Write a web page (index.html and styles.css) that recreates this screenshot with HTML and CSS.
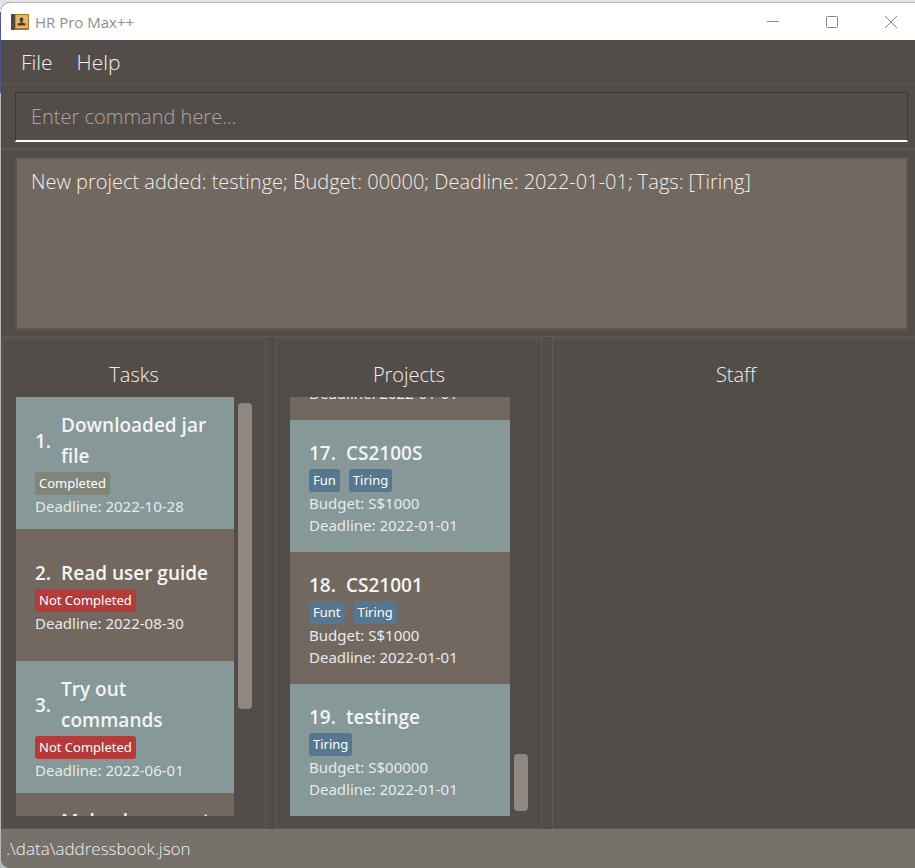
FILE: index.html
```html
<!DOCTYPE html>
<html lang="en">
<head>
<meta charset="utf-8">
<title>HR Pro Max++</title>
<link rel="stylesheet" href="styles.css">
</head>
<body>
<div class="window">
  <header class="titlebar">
    <svg class="app-icon" viewBox="0 0 18 16" aria-hidden="true">
      <rect width="18" height="16" rx="1" fill="#a8761f"/>
      <rect width="4" height="16" rx="1" fill="#54453f"/>
      <rect x="4" y="1" width="13" height="13" fill="#e3b566"/>
      <rect x="4" y="1" width="1" height="13" fill="#c08e3a"/>
      <path d="M10.500 3.500a2 2 0 0 1 1.300 3.400q-.5.8-.3 1.900l3 .8v2h-8v-2l3-.8q.2-1.100-.3-1.900a2 2 0 0 1 1.300-3.400z" fill="#4c3e32"/>
    </svg>
    <span class="app-name">HR Pro Max++</span>
    <div class="window-buttons">
      <button type="button" aria-label="Minimize"><svg viewBox="0 0 12 12"><path d="M0 5.500h12"/></svg></button>
      <button type="button" aria-label="Maximize"><svg viewBox="0 0 12 12"><rect x=".5" y=".5" width="11" height="11" rx="1"/></svg></button>
      <button type="button" aria-label="Close"><svg viewBox="0 0 12 12"><path d="M0 0l12 12M12 0L0 12"/></svg></button>
    </div>
  </header>

  <nav class="menubar">
    <button type="button">File</button>
    <button type="button">Help</button>
  </nav>

  <div class="command-pane">
    <input class="command" type="text" placeholder="Enter command here..." aria-label="Command">
  </div>

  <div class="result-pane">
    <textarea class="result" readonly aria-label="Result">New project added: testinge; Budget: 00000; Deadline: 2022-01-01; Tags: [Tiring]</textarea>
  </div>

  <main class="columns">
    <section class="column">
      <h2>Tasks</h2>
      <div class="scroller">
        <ol class="list">
          <li class="card">
            <div class="title"><span>1.</span><span>Downloaded jar file</span></div>
            <div class="tags"><span class="tag done">Completed</span></div>
            <p>Deadline: 2022-10-28</p>
          </li>
          <li class="card">
            <div class="title"><span>2.</span><span>Read user guide</span></div>
            <div class="tags"><span class="tag pending">Not Completed</span></div>
            <p>Deadline: 2022-08-30</p>
          </li>
          <li class="card">
            <div class="title"><span>3.</span><span>Try out commands</span></div>
            <div class="tags"><span class="tag pending">Not Completed</span></div>
            <p>Deadline: 2022-06-01</p>
          </li>
          <li class="card">
            <div class="title"><span>4.</span><span>Make document<br>file</span></div>
            <div class="tags"><span class="tag pending">Not Completed</span></div>
            <p>Deadline: 2022-06-01</p>
          </li>
        </ol>
        <div class="track"><div class="thumb thumb-tasks"></div></div>
      </div>
    </section>

    <section class="column">
      <h2>Projects</h2>
      <div class="scroller">
        <ol class="list list-end">
          <li class="card">
            <div class="title"><span>16.</span><span>CS2100</span></div>
            <div class="tags"><span class="tag">Fun</span></div>
            <p>Budget: S$1000</p>
            <p>Deadline: 2022-01-01</p>
          </li>
          <li class="card">
            <div class="title"><span>17.</span><span>CS2100S</span></div>
            <div class="tags"><span class="tag">Fun</span><span class="tag">Tiring</span></div>
            <p>Budget: S$1000</p>
            <p>Deadline: 2022-01-01</p>
          </li>
          <li class="card">
            <div class="title"><span>18.</span><span>CS21001</span></div>
            <div class="tags"><span class="tag">Funt</span><span class="tag">Tiring</span></div>
            <p>Budget: S$1000</p>
            <p>Deadline: 2022-01-01</p>
          </li>
          <li class="card">
            <div class="title"><span>19.</span><span>testinge</span></div>
            <div class="tags"><span class="tag">Tiring</span></div>
            <p>Budget: S$00000</p>
            <p>Deadline: 2022-01-01</p>
          </li>
        </ol>
        <div class="track track-end"><div class="thumb thumb-projects"></div></div>
      </div>
    </section>

    <section class="column column-last">
      <h2>Staff</h2>
    </section>
  </main>

  <footer class="statusbar">.\data\addressbook.json</footer>
</div>
</body>
</html>
```

FILE: styles.css
```css
* {
  box-sizing: border-box;
}

body {
  margin: 0;
  padding: 2px 0 0 1px;
  height: 100vh;
  background: linear-gradient(#e2e4e5 12px, #4d5592 12px, #4d5592 93px, #b4b9b8 93px);
  font-family: "Open Sans", "Noto Sans", sans-serif;
}

button,
input,
textarea {
  font: inherit;
  color: inherit;
  margin: 0;
}

h2,
p,
ol {
  margin: 0;
  padding: 0;
}

.window {
  display: flex;
  flex-direction: column;
  height: 100%;
  overflow: hidden;
  border-radius: 9px 0 0 9px;
  background: #534d49;
  color: #f0efee;
  font-weight: 300;
}

.titlebar {
  display: flex;
  align-items: center;
  flex: none;
  height: 38px;
  padding-left: 10px;
  border-top: 1px solid #b3b5b7;
  border-radius: 9px 0 0 0;
  background: #fff;
  color: #8f8f8f;
  font-size: 15px;
  font-weight: 400;
}

.app-icon {
  width: 18px;
  height: 16px;
  margin-right: 6px;
}

.window-buttons {
  display: flex;
  margin-left: auto;
  gap: 11px;
}

.window-buttons button {
  display: grid;
  place-items: center;
  width: 48px;
  height: 36px;
  padding: 0;
  border: 0;
  background: none;
}

.window-buttons svg {
  width: 12px;
  height: 12px;
  fill: none;
  stroke: #8a8a8a;
}

.menubar {
  display: flex;
  flex: none;
  gap: 24px;
  height: 45px;
  padding: 0 20px;
  border-bottom: 1px solid #5f5a56;
  font-size: 21px;
}

.menubar button {
  padding: 0;
  border: 0;
  background: none;
}

.command-pane {
  flex: none;
  padding: 7px 7px 6px 14px;
  border-bottom: 2px solid #5c5752;
}

.command {
  display: block;
  width: 100%;
  height: 50px;
  padding: 0 15px;
  border: 1px solid #403733;
  border-bottom: 2px solid #fff;
  background: #534d49;
  font-size: 20px;
}

.command::placeholder {
  color: #a9a6a3;
  opacity: 1;
}

.result-pane {
  flex: none;
  padding: 7px 7px 6px 14px;
  border-bottom: 1px solid #5f5a56;
}

.result {
  display: block;
  width: 100%;
  height: 173px;
  padding: 9px 14px;
  border: 2px solid #5c5651;
  background: #73685f;
  font-size: 20px;
  line-height: 28px;
  resize: none;
  outline: 0;
}

.columns {
  display: grid;
  grid-template-columns: 264fr 266fr 363fr;
  gap: 10px;
  flex: 1;
  min-height: 0;
  padding: 1px 0 0 1px;
}

.column {
  display: flex;
  flex-direction: column;
  min-width: 0;
  min-height: 0;
  padding: 18px 13px 12px;
  border: 1px solid #5f5a56;
}

.column-last {
  padding-right: 9px;
  border-right: 0;
}

h2 {
  height: 40px;
  font-size: 20px;
  font-weight: 300;
  line-height: 35px;
  text-align: center;
}

.scroller {
  display: flex;
  flex: 1;
  min-height: 0;
}

.list {
  display: flex;
  flex: 1;
  flex-direction: column;
  overflow: hidden;
  list-style: none;
}

.list-end {
  justify-content: flex-end;
}

.card {
  display: flex;
  flex: none;
  flex-direction: column;
  justify-content: center;
  height: 132px;
  padding: 1px 16px 0 19px;
  background: #73685f;
  font-family: "Noto Sans", "Open Sans", sans-serif;
  font-size: 15px;
  font-weight: 400;
  line-height: 22px;
  color: #e8eaea;
}

.card:nth-child(odd) {
  background: #869897;
}

.list-end .card:nth-child(odd) {
  background: #73685f;
}

.list-end .card:nth-child(even) {
  background: #869897;
}

.title {
  display: flex;
  align-items: center;
  gap: 10px;
  color: #f3f4f4;
  font-family: "Open Sans", "Noto Sans", sans-serif;
  font-size: 19px;
  font-weight: 600;
  line-height: 31px;
}

.tags {
  display: flex;
  gap: 9px;
}

.tag {
  height: 23px;
  padding: 0 4px;
  border-radius: 3px;
  background: #557890;
  color: #fff;
  font-size: 13px;
}

.tag.done {
  background: #7f8579;
}

.tag.pending {
  background: #b53a3a;
}

.track {
  display: flex;
  flex: none;
  flex-direction: column;
  width: 18px;
  padding: 6px 0 5px 4px;
}

.track-end {
  justify-content: flex-end;
}

.thumb {
  width: 14px;
  border-radius: 4px;
  background: #8f8882;
}

.thumb-tasks {
  height: 75%;
}

.thumb-projects {
  height: 14%;
}

.statusbar {
  flex: none;
  height: 39px;
  padding: 0 5px;
  background: #77716b;
  border-radius: 0 0 0 9px;
  font-size: 17px;
  line-height: 39px;
}
```
